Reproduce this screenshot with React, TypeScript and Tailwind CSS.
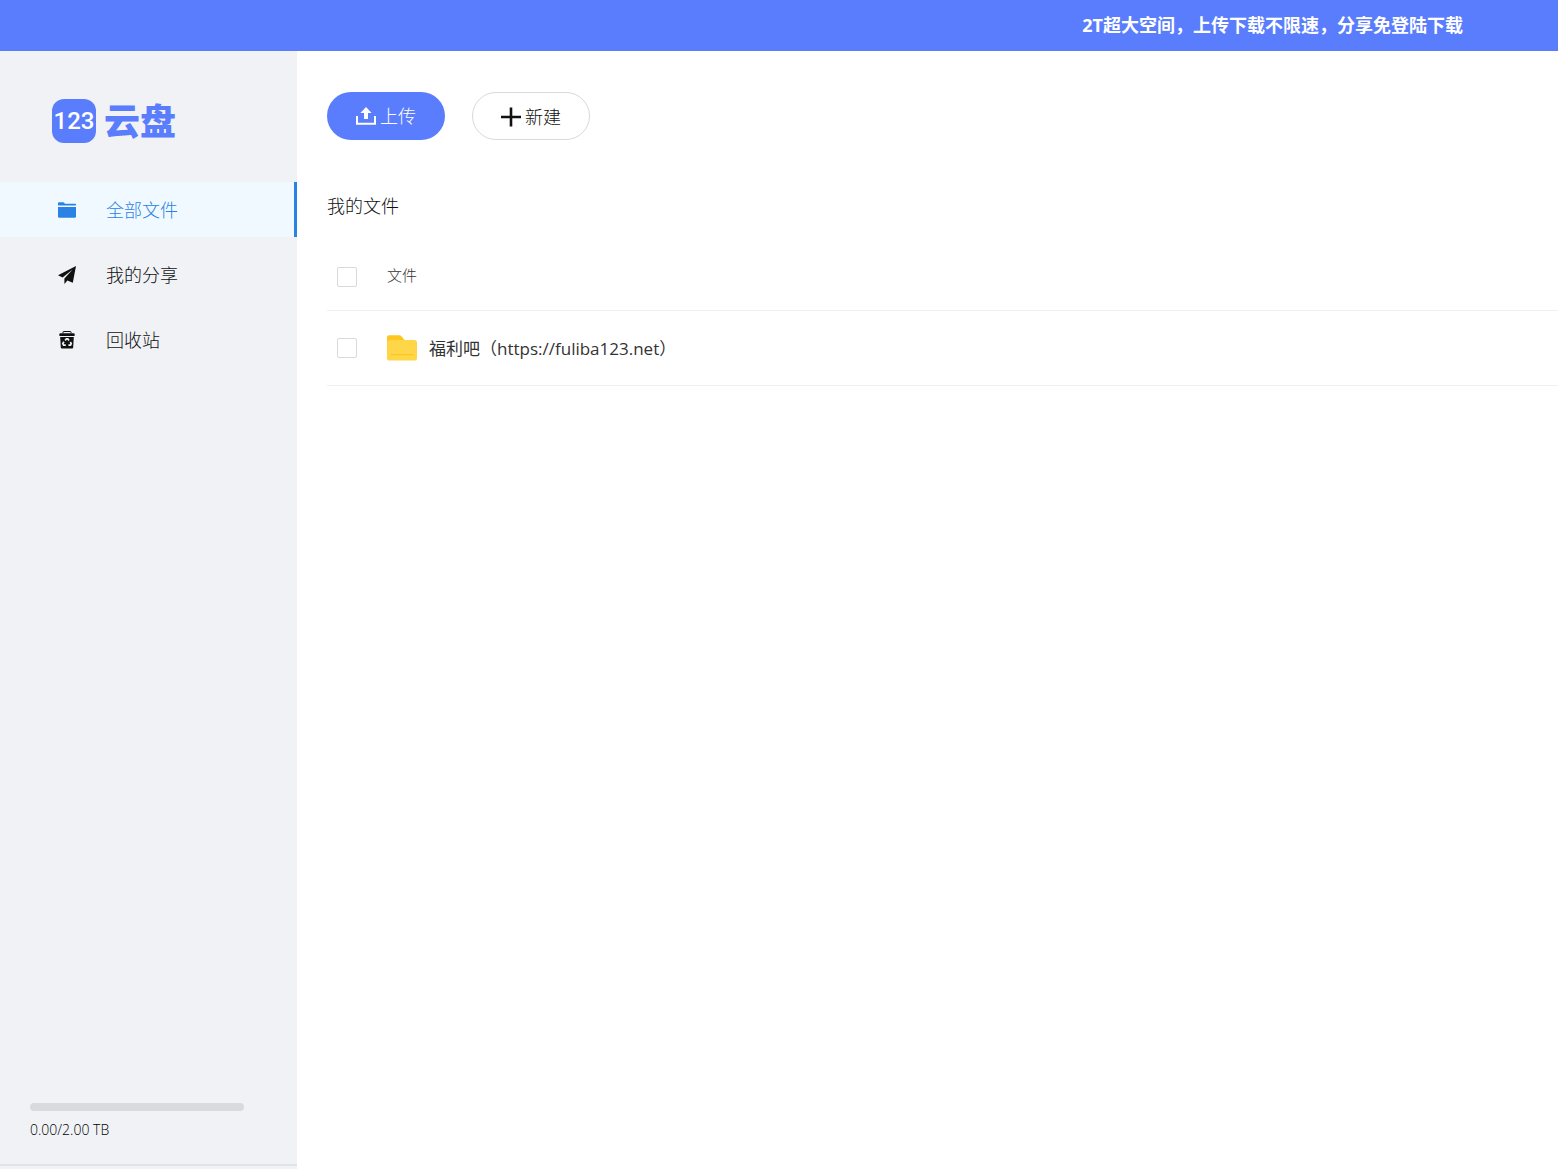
import {useState} from "react";
import type {ReactNode} from "react";

interface INavItem {
    id: string;
    label: string;
    icon: ReactNode;
}

interface IFile {
    id: number;
    name: string;
}

const FolderIcon = () => (
    <svg viewBox="0 0 18 16" className="w-[18px] h-4" fill="currentColor" aria-hidden="true">
        <path d="M0 3.6V1.2Q0 .3.9.3H5.6L7 1.8H17.1Q18 1.8 18 2.7V3.6Z"/>
        <path d="M0 5H18V14.4Q18 15.7 16.7 15.7H1.3Q0 15.7 0 14.4Z"/>
    </svg>
);

const PlaneIcon = () => (
    <svg viewBox="0 0 18 18" className="size-[18px]" fill="currentColor" aria-hidden="true">
        <path d="M18 0 0 9.2l4.6 2.4L14.6 3.4 6.4 12.6V18l3-3.4 5.4 2.2Z"/>
    </svg>
);

const TrashIcon = () => (
    <svg viewBox="0 0 18 18" className="size-[18px]" aria-hidden="true">
        <path d="M5 2.4V1.1Q5 .5 5.6.5h6.8q.6 0 .6.6v1.3" fill="none" stroke="currentColor"/>
        <path d="M2.4 2.3h13.2q1 0 1 1v1.6H1.4V3.3q0-1 1-1Z" fill="currentColor"/>
        <path d="M2.2 6h13.6l-.6 10.6q-.1 1-1.1 1H3.9q-1 0-1.1-1Z" fill="currentColor"/>
        <path
            d="M7.1 9.3 8.4 7.9h1.4l1.2 1.7M12.3 11l.9 1.6-.7 1.6h-2.1M7.8 14.2H5.6l-.8-1.6 1.1-1.9"
            fill="none"
            stroke="#f0f2f6"
            strokeWidth="1.7"
        />
    </svg>
);

const UploadIcon = () => (
    <svg viewBox="0 0 20 18" className="w-5 h-[18px]" aria-hidden="true">
        <path d="M10 0 15.6 6H12v6H8V6H4.4Z" fill="currentColor"/>
        <path d="M1 9v7.8H19V9" fill="none" stroke="currentColor" strokeWidth="2"/>
    </svg>
);

const PlusIcon = () => (
    <svg viewBox="0 0 20 20" className="size-5" aria-hidden="true">
        <path d="M10 .5V19.5M0 10H20" fill="none" stroke="currentColor" strokeWidth="2.6"/>
    </svg>
);

const YellowFolder = () => (
    <svg viewBox="0 0 30 26" className="w-[30px] h-[26px]" aria-hidden="true">
        <path d="M0 2.5Q0 .3 2.2.3H12.4Q13.6.3 14.4 1.2L18 5.5V12H0Z" fill="#ffc61f"/>
        <path d="M0 8Q0 5 3 5H27.5Q30 5 30 7.5V23Q30 25.6 27.4 25.6H2.6Q0 25.6 0 23Z" fill="#ffd648"/>
        <path d="M4.5 19.6H26" stroke="#ffc61f" strokeWidth="1.2" strokeLinecap="round"/>
    </svg>
);

const navItems: INavItem[] = [
    {id: "all", label: "全部文件", icon: <FolderIcon/>},
    {id: "share", label: "我的分享", icon: <PlaneIcon/>},
    {id: "recycle", label: "回收站", icon: <TrashIcon/>}
];

const files: IFile[] = [
    {id: 1, name: "福利吧（https://fuliba123.net）"}
];

const checkboxClass = "block appearance-none size-5 bg-white border border-[#d9d9d9] rounded-xs checked:bg-[#597dfc]";

const Sidebar = () => {
    const [active, setActive] = useState<string>("all");
    const used = 0;
    const total = 2;

    return (
        <aside className="w-[297px] shrink-0 flex flex-col bg-[#f0f2f6]">
            <a href="#home" className="flex items-center gap-2 h-[131px] pl-[52px] pt-2 text-[#597dfc]">
                <span className="flex items-center justify-center size-11 mt-px rounded-xl bg-[#597dfc] text-white font-[Roboto] font-medium text-2xl">
                    123
                </span>
                <span className="pt-0.5 text-4xl font-black">云盘</span>
            </a>

            <nav className="flex flex-col gap-2.5">
                {navItems.map((item) => (
                    <a
                        key={item.id}
                        href={`#${item.id}`}
                        onClick={() => setActive(item.id)}
                        className={`flex items-center h-[55px] pl-[58px] gap-[30px] text-lg ${
                            active === item.id
                                ? "bg-[#f0f9ff] text-[#2b82e5] border-r-3 border-[#2b82e5]"
                                : "text-[#111]"
                        }`}
                    >
                        {item.icon}
                        <span>{item.label}</span>
                    </a>
                ))}
            </nav>

            <div className="mt-auto mb-[3px] px-[30px] pb-6 border-b-2 border-[#e2e3e6]">
                <div
                    role="progressbar"
                    aria-label="storage"
                    aria-valuenow={used}
                    aria-valuemax={total}
                    className="h-2 mr-[23px] rounded-full bg-[#d9dadd] overflow-hidden"
                >
                    <div className="h-full bg-[#597dfc]" style={{width: `${(used / total) * 100}%`}}/>
                </div>
                <p className="mt-2 text-sm leading-[21px] text-black">
                    {used.toFixed(2)}/{total.toFixed(2)} TB
                </p>
            </div>
        </aside>
    );
};

const FileTable = () => {
    const [selected, setSelected] = useState<number[]>([]);

    const handleToggle = (id: number) => {
        setSelected((prev) => prev.includes(id) ? prev.filter((s) => s !== id) : [...prev, id]);
    };

    const handleToggleAll = () => {
        setSelected(selected.length === files.length ? [] : files.map((file) => file.id));
    };

    return (
        <table className="w-full mt-6 border-collapse text-left">
            <thead>
                <tr className="h-[66px] border-b border-[#f0f0f0]">
                    <th className="w-[60px] pl-2.5">
                        <input
                            type="checkbox"
                            aria-label="全选"
                            checked={selected.length === files.length}
                            onChange={handleToggleAll}
                            className={checkboxClass}
                        />
                    </th>
                    <th className="pb-1 font-light text-[15px] text-[#333]">文件</th>
                </tr>
            </thead>
            <tbody>
                {files.map((file) => (
                    <tr key={file.id} className="h-[75px] border-b border-[#f0f0f0]">
                        <td className="pl-2.5">
                            <input
                                type="checkbox"
                                aria-label={file.name}
                                checked={selected.includes(file.id)}
                                onChange={() => handleToggle(file.id)}
                                className={checkboxClass}
                            />
                        </td>
                        <td>
                            <a href="#folder" className="flex items-center gap-3 text-[17px] font-normal text-[#333]">
                                <YellowFolder/>
                                <span className="pt-0.5">{file.name}</span>
                            </a>
                        </td>
                    </tr>
                ))}
            </tbody>
        </table>
    );
};

const App = () => {
    return (
        <div className="min-h-screen flex flex-col bg-white font-light text-[#111] font-['Open_Sans','Noto_Sans_CJK_SC',sans-serif]">
            <header className="h-[51px] flex items-center justify-end pr-[95px] pb-0.5 bg-[#597dfc]">
                <p className="text-lg font-bold text-white">2T超大空间，上传下载不限速，分享免登陆下载</p>
            </header>

            <div className="flex flex-1">
                <Sidebar/>

                <main className="flex-1 pl-[30px] pt-[41px]">
                    <div className="flex gap-[27px]">
                        <button className="flex items-center justify-center gap-1 w-[118px] h-12 rounded-full bg-[#597dfc] text-white text-lg">
                            <UploadIcon/>
                            上传
                        </button>
                        <button className="flex items-center justify-center gap-1 w-[118px] h-12 pt-0.5 rounded-full border border-[#d9d9d9] text-lg">
                            <PlusIcon/>
                            新建
                        </button>
                    </div>

                    <h1 className="mt-[52px] text-lg">我的文件</h1>

                    <FileTable/>
                </main>
            </div>
        </div>
    );
};

export default App;
